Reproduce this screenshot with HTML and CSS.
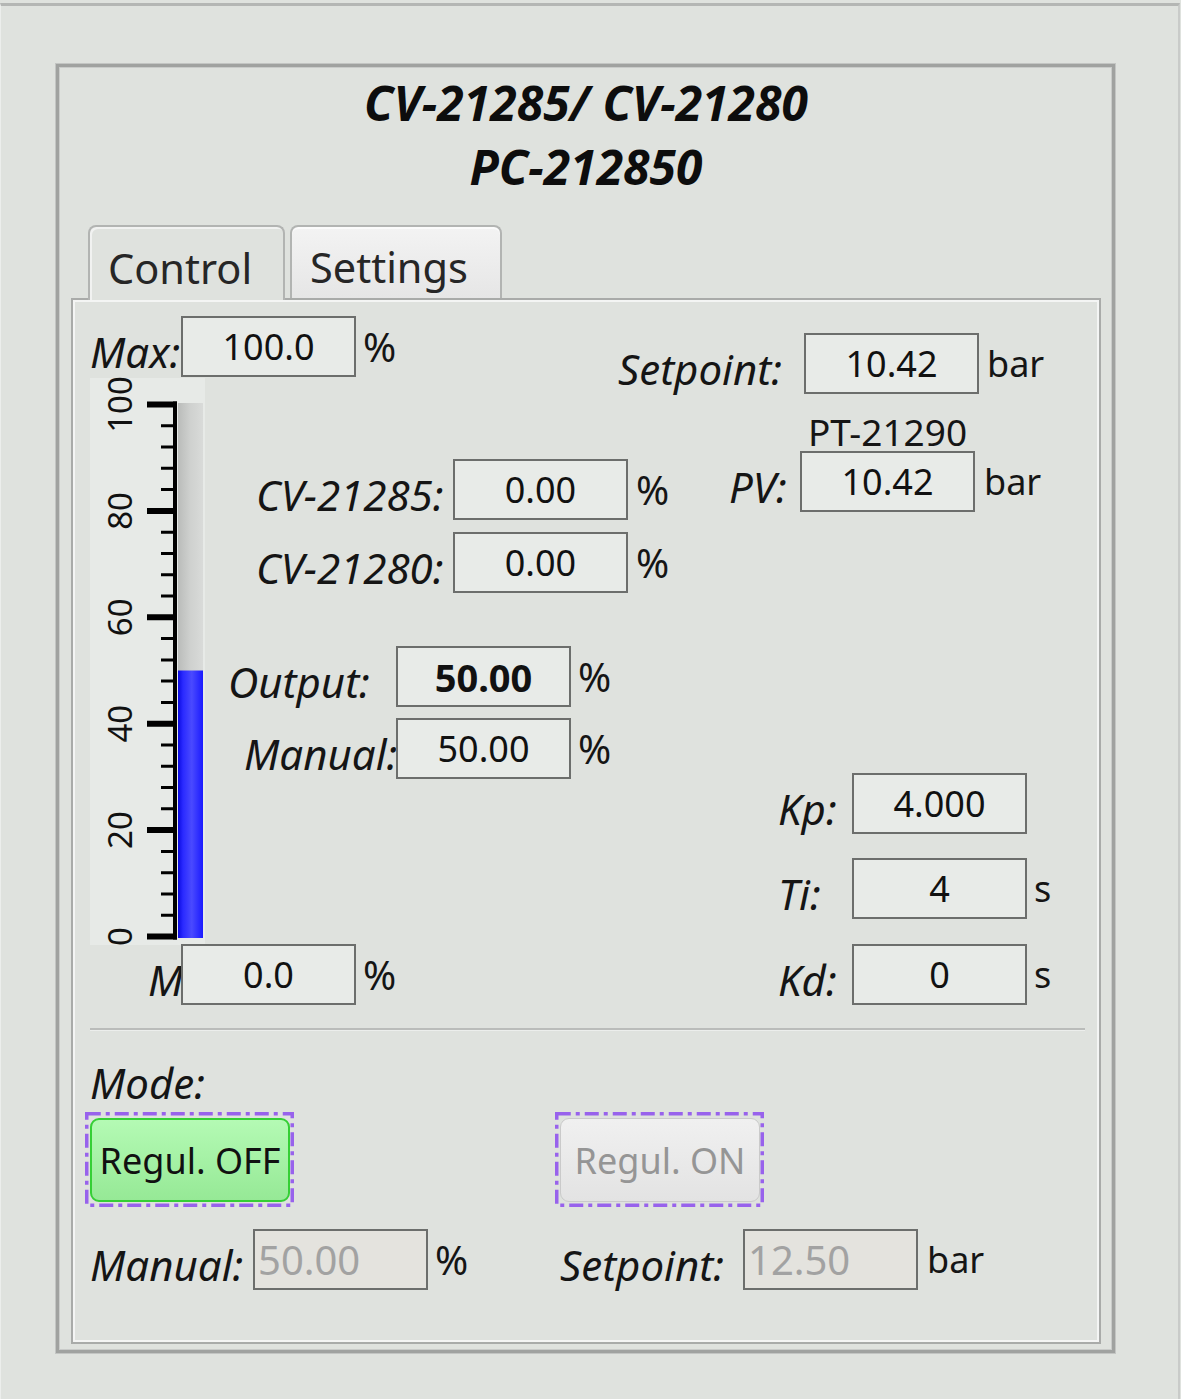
FILE: index.html
```html
<!DOCTYPE html>
<html>
<head>
<meta charset="utf-8">
<title>PC-212850</title>
<link rel="stylesheet" href="styles.css">
</head>
<body>
<div class="window">
  <div class="frame">
    <h1 class="title">CV-21285/ CV-21280<br>PC-212850</h1>
    <div class="tabs">
      <div class="tab tab-active">Control</div>
      <div class="tab tab-idle">Settings</div>
    </div>
    <div class="panel">
      <div class="upper">
        <div class="col-gauge">
          <div class="field f-max"><span class="lbl">Max:</span><div class="box">100.0</div><span class="unit pct">%</span></div>
          <div class="scale">
            <svg width="115" height="567" viewBox="0 0 115 567">
              <defs>
                <linearGradient id="groove" x1="0" y1="0" x2="1" y2="0">
                  <stop offset="0" stop-color="#babcba"/>
                  <stop offset="0.5" stop-color="#cfd1cf"/>
                  <stop offset="1" stop-color="#d9dbd9"/>
                </linearGradient>
                <linearGradient id="fill" x1="0" y1="0" x2="1" y2="0">
                  <stop offset="0" stop-color="#0a0ae0"/>
                  <stop offset="0.2" stop-color="#2a2aff"/>
                  <stop offset="0.55" stop-color="#4a4aff"/>
                  <stop offset="1" stop-color="#1a1aff"/>
                </linearGradient>
              </defs>
              <rect x="88" y="25" width="25" height="535" fill="url(#groove)"/>
              <rect x="88" y="292.5" width="25" height="267.5" fill="url(#fill)"/>
              <line x1="85" y1="23.5" x2="85" y2="561.5" stroke="#000" stroke-width="4"/>
              <path stroke="#000" stroke-width="6" fill="none" d="M57 558.5H87M57 452.1H87M57 345.7H87M57 239.3H87M57 132.9H87M57 26.5H87"/>
              <path stroke="#000" stroke-width="3" fill="none" d="M71 537.2H87M71 515.9H87M71 494.7H87M71 473.4H87M71 430.8H87M71 409.5H87M71 388.3H87M71 367H87M71 324.4H87M71 303.1H87M71 281.9H87M71 260.6H87M71 218H87M71 196.7H87M71 175.5H87M71 154.2H87M71 111.6H87M71 90.3H87M71 69.1H87M71 47.8H87"/>
              <g class="scale-num" text-anchor="middle">
                <text transform="translate(42 558.5) rotate(-90)">0</text>
                <text transform="translate(42 452.1) rotate(-90)">20</text>
                <text transform="translate(42 345.7) rotate(-90)">40</text>
                <text transform="translate(42 239.3) rotate(-90)">60</text>
                <text transform="translate(42 132.9) rotate(-90)">80</text>
                <text transform="translate(42 26.5) rotate(-90)">100</text>
              </g>
            </svg>
          </div>
          <div class="field f-min"><span class="lbl">Min:</span><div class="box">0.0</div><span class="unit pct">%</span></div>
        </div>

        <div class="col-mid">
          <div class="field f-cv1"><span class="lbl">CV-21285:</span><div class="box">0.00</div><span class="unit pct">%</span></div>
          <div class="field f-cv2"><span class="lbl">CV-21280:</span><div class="box">0.00</div><span class="unit pct">%</span></div>
          <div class="field f-out"><span class="lbl">Output:</span><div class="box box-bold">50.00</div><span class="unit pct">%</span></div>
          <div class="field f-man"><span class="lbl">Manual:</span><div class="box">50.00</div><span class="unit pct">%</span></div>
        </div>

        <div class="col-right">
          <div class="field f-sp"><span class="lbl">Setpoint:</span><div class="box">10.42</div><span class="unit">bar</span></div>
          <div class="pt-name">PT-21290</div>
          <div class="field f-pv"><span class="lbl">PV:</span><div class="box">10.42</div><span class="unit">bar</span></div>
          <div class="field f-kp"><span class="lbl">Kp:</span><div class="box">4.000</div></div>
          <div class="field f-ti"><span class="lbl">Ti:</span><div class="box">4</div><span class="unit">s</span></div>
          <div class="field f-kd"><span class="lbl">Kd:</span><div class="box">0</div><span class="unit">s</span></div>
        </div>
      </div>

      <div class="sep"></div>
      <div class="lbl mode-lbl">Mode:</div>
      <div class="mode-row">
        <div class="mode-slot slot-off">
          <div class="mbtn mbtn-on-state">Regul. OFF</div>
          <svg class="focus-ring" width="209" height="95" viewBox="0 0 209 95"><rect x="1.75" y="1.75" width="205.5" height="91.5" fill="none" stroke="#9862ec" stroke-width="3.5" stroke-dasharray="14 5 4 5"/></svg>
        </div>
        <div class="mode-slot slot-on">
          <div class="mbtn mbtn-disabled">Regul. ON</div>
          <svg class="focus-ring" width="209" height="95" viewBox="0 0 209 95"><rect x="1.75" y="1.75" width="205.5" height="91.5" fill="none" stroke="#9862ec" stroke-width="3.5" stroke-dasharray="14 5 4 5"/></svg>
        </div>
      </div>
      <div class="bottom-row">
        <div class="field f-bman"><span class="lbl">Manual:</span><div class="box box-dis">50.00</div><span class="unit pct">%</span></div>
        <div class="field f-bsp"><span class="lbl">Setpoint:</span><div class="box box-dis">12.50</div><span class="unit">bar</span></div>
      </div>
    </div>
  </div>
</div>
</body>
</html>
```

FILE: styles.css
```css
* { box-sizing: border-box; }

html, body {
  margin: 0;
  padding: 0;
  background: #dfe2de;
}

body {
  font-family: "Noto Sans", "DejaVu Sans", sans-serif;
  color: #151515;
}

.window {
  width: 1180px;
  height: 1396px;
  margin-top: 3px;
  border-top: 3px solid #b4b6b4;
  border-right: 2px solid #c9cbc9;
  border-left: 1px solid #eceeec;
  overflow: hidden;
}

.frame {
  margin: 58px 0 0 55px;
  width: 1059px;
  height: 1289px;
  border: 3px solid #a0a2a0;
  box-shadow: 0 0 0 1px #c3c5c3, inset 0 0 0 1px #c9cbc9;
  padding: 4px 11px 6px 12px;
}

.title {
  margin: 0;
  font-size: 48px;
  font-weight: 700;
  font-style: italic;
  line-height: 64px;
  text-align: center;
  color: #0d0d0d;
}

.tabs {
  margin-top: 26px;
  margin-left: 17px;
  display: flex;
  gap: 5px;
  align-items: flex-start;
  height: 73px;
}

.tab {
  height: 73px;
  padding: 8px 0 0 18px;
  display: flex;
  align-items: center;
  font-size: 41.5px;
  color: #262626;
  border: 2px solid #b2b4b2;
  border-bottom: none;
  border-radius: 8px 8px 0 0;
}

.tab-active {
  position: relative;
  z-index: 1;
  width: 197px;
  height: 75px;
  margin-bottom: -2px;
  background: #dfe2de;
  box-shadow: inset 2px 2px 0 #f1f2f1;
}

.tab-idle {
  width: 212px;
  background: linear-gradient(#f3f3f3, #e6e6e6);
  box-shadow: inset 0 2px 0 #fbfbfb;
}

.panel {
  height: 1046px;
  border: 2px solid #a9aba9;
  box-shadow: inset 0 0 0 2px #f4f5f4;
  background: #dfe2de;
}

.upper {
  display: flex;
  padding-left: 17px;
  height: 705px;
}

/* generic field row */
.field {
  display: flex;
  align-items: center;
}

.lbl {
  flex: none;
  font-size: 42px;
  font-style: italic;
  line-height: 48px;
  padding-top: 10px;
  white-space: nowrap;
  color: #151515;
}

.box {
  flex: none;
  width: 175px;
  height: 61px;
  border: 2px solid #6c6e6c;
  background: #e8ebe8;
  display: flex;
  align-items: center;
  justify-content: center;
  font-size: 36px;
  color: #111;
}

.box-bold {
  font-weight: 700;
  font-size: 38px;
}

.box-dis {
  background: #e4e3de;
  color: #a2a2a2;
  justify-content: flex-start;
  padding-left: 3px;
  font-size: 40px;
}

.unit {
  flex: none;
  font-size: 36px;
  margin-left: 7px;
  color: #151515;
}

.pct { font-size: 40px; }

/* gauge column */
.col-gauge {
  flex: none;
  width: 138px;
}

.f-max { margin-top: 16px; }
.f-max .lbl { width: 91px; }

.scale {
  margin-top: 1px;
  width: 115px;
  height: 567px;
  background: #e7eae7;
}

.scale svg { display: block; overflow: visible; }

.scale-num {
  font-family: "Noto Sans", sans-serif;
  font-size: 33px;
  fill: #111;
}

.f-min { margin-top: -1px; }
.f-min .lbl {
  margin-left: 58px;
  width: 33px;
  overflow: hidden;
}

/* middle column */
.col-mid {
  flex: none;
  width: 319px;
}

.f-cv1 { margin-top: 159px; padding-left: 28px; }
.f-cv2 { margin-top: 12px; padding-left: 28px; }
.f-cv1 .lbl, .f-cv2 .lbl { width: 197px; }
.f-cv1 .unit, .f-cv2 .unit { margin-left: 8px; }

.f-out { margin-top: 53px; }
.f-out .lbl { width: 168px; }

.f-man { margin-top: 11px; padding-left: 16px; }
.f-man .lbl { width: 152px; }

/* right column */
.col-right {
  flex: 1;
}

.f-sp { margin-top: 33px; padding-left: 71px; }
.f-sp .lbl { width: 186px; }
.f-sp .unit { margin-left: 8px; }

.pt-name {
  margin-top: 20px;
  margin-left: 253px;
  width: 175px;
  text-align: center;
  font-size: 37px;
  line-height: 36px;
  color: #151515;
}

.f-pv { margin-top: 1px; padding-left: 182px; }
.f-pv .lbl { width: 71px; }
.f-pv .unit { margin-left: 9px; }

.f-kp { margin-top: 261px; padding-left: 231px; }
.f-ti { margin-top: 24px; padding-left: 231px; }
.f-kd { margin-top: 25px; padding-left: 231px; }
.f-kp .lbl, .f-ti .lbl, .f-kd .lbl { width: 74px; }

/* lower section */
.sep {
  margin: 23px 0 0 17px;
  width: 995px;
  height: 3px;
  border-top: 2px solid #babcba;
  border-bottom: 1px solid #eceeec;
}

.mode-lbl {
  margin: 28px 0 0 17px;
  padding-top: 0;
}

.mode-row {
  display: flex;
  margin-top: 5px;
}

.mode-slot {
  position: relative;
  flex: none;
  width: 209px;
  height: 95px;
  padding: 6px 4px 5px 5px;
}

.slot-off { margin-left: 12px; }
.slot-on { margin-left: 261px; }

.focus-ring {
  position: absolute;
  left: 0;
  top: 0;
}

.mbtn {
  width: 200px;
  height: 84px;
  border-radius: 9px;
  display: flex;
  align-items: center;
  justify-content: center;
  font-size: 36px;
}

.mbtn-on-state {
  border: 2px solid #35cf35;
  background: linear-gradient(#b4fab4, #96e996);
  color: #111;
}

.mbtn-disabled {
  border: 1px solid #cacaca;
  background: linear-gradient(#f0f0f0, #e3e3e3);
  color: #959595;
}

.bottom-row {
  display: flex;
  margin-top: 22px;
  padding-left: 17px;
}

.f-bman { width: 470px; flex: none; }
.f-bman .lbl { width: 163px; }

.f-bsp .lbl { width: 183px; }
.f-bsp .unit { margin-left: 9px; }
```
